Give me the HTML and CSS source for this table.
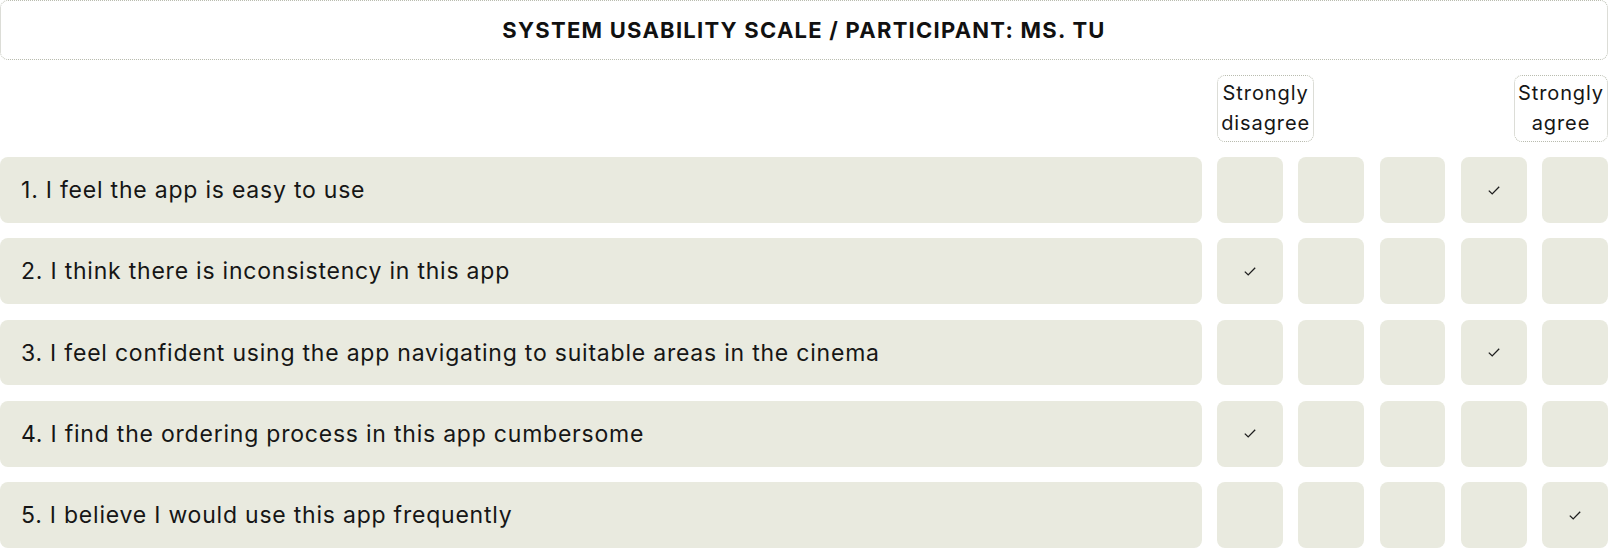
FILE: index.html
```html
<!DOCTYPE html>
<html lang="en">
<head>
<meta charset="utf-8">
<title>System Usability Scale</title>
<link rel="stylesheet" href="styles.css">
</head>
<body>
<main class="sus">
  <h1 class="title">SYSTEM USABILITY SCALE / PARTICIPANT: MS. TU</h1>

  <div class="spacer"></div>
  <div class="scale-label start">Strongly<br>disagree</div>
  <div class="spacer"></div>
  <div class="spacer"></div>
  <div class="spacer"></div>
  <div class="scale-label end">Strongly<br>agree</div>

  <div class="question">1. I feel the app is easy to use</div>
  <div class="cell"></div>
  <div class="cell"></div>
  <div class="cell"></div>
  <div class="cell checked"><svg class="tick" viewBox="0 0 12 9" width="12" height="9"><polyline points="0.8,4.6 4.2,7.9 11.2,0.8"/></svg></div>
  <div class="cell"></div>

  <div class="question">2. I think there is inconsistency in this app</div>
  <div class="cell checked"><svg class="tick" viewBox="0 0 12 9" width="12" height="9"><polyline points="0.8,4.6 4.2,7.9 11.2,0.8"/></svg></div>
  <div class="cell"></div>
  <div class="cell"></div>
  <div class="cell"></div>
  <div class="cell"></div>

  <div class="question">3. I feel confident using the app navigating to suitable areas in the cinema</div>
  <div class="cell"></div>
  <div class="cell"></div>
  <div class="cell"></div>
  <div class="cell checked"><svg class="tick" viewBox="0 0 12 9" width="12" height="9"><polyline points="0.8,4.6 4.2,7.9 11.2,0.8"/></svg></div>
  <div class="cell"></div>

  <div class="question">4. I find the ordering process in this app cumbersome</div>
  <div class="cell checked"><svg class="tick" viewBox="0 0 12 9" width="12" height="9"><polyline points="0.8,4.6 4.2,7.9 11.2,0.8"/></svg></div>
  <div class="cell"></div>
  <div class="cell"></div>
  <div class="cell"></div>
  <div class="cell"></div>

  <div class="question">5. I believe I would use this app frequently</div>
  <div class="cell"></div>
  <div class="cell"></div>
  <div class="cell"></div>
  <div class="cell"></div>
  <div class="cell checked"><svg class="tick" viewBox="0 0 12 9" width="12" height="9"><polyline points="0.8,4.6 4.2,7.9 11.2,0.8"/></svg></div>
</main>
</body>
</html>
```

FILE: styles.css
```css
* { box-sizing: border-box; }

html, body {
  margin: 0;
  padding: 0;
  background: #ffffff;
}

body {
  font-family: Inter, "Noto Sans", "Liberation Sans", sans-serif;
  color: #161616;
}

.sus {
  display: grid;
  grid-template-columns: 1fr repeat(5, 65.7px);
  grid-template-rows: 59.5px 66.5px repeat(5, 65.7px);
  column-gap: 15.6px;
  row-gap: 15.6px;
  width: 1608px;
}

.title {
  grid-column: 1 / -1;
  margin: 0;
  border: 1px dotted #b9bcaf;
  border-radius: 8px;
  display: flex;
  align-items: center;
  justify-content: center;
  font-size: 22px;
  font-weight: 700;
  letter-spacing: 1.25px;
  color: #111;
}

.scale-label {
  width: max-content;
  border: 1px dotted #b9bcaf;
  border-radius: 8px;
  padding: 2px 3px;
  font-size: 20px;
  letter-spacing: 0.9px;
  line-height: 30px;
  text-align: center;
  color: #161616;
}

.scale-label.start { justify-self: start; }
.scale-label.end { justify-self: end; }

.question {
  background: #e9eadf;
  border-radius: 8px;
  display: flex;
  align-items: center;
  padding-left: 21px;
  font-size: 23px;
  letter-spacing: 0.78px;
  color: #161616;
}

.cell {
  background: #e9eadf;
  border-radius: 8px;
  display: flex;
  align-items: center;
  justify-content: center;
}

.tick polyline {
  fill: none;
  stroke: #1e1e1e;
  stroke-width: 1.3;
}
```
